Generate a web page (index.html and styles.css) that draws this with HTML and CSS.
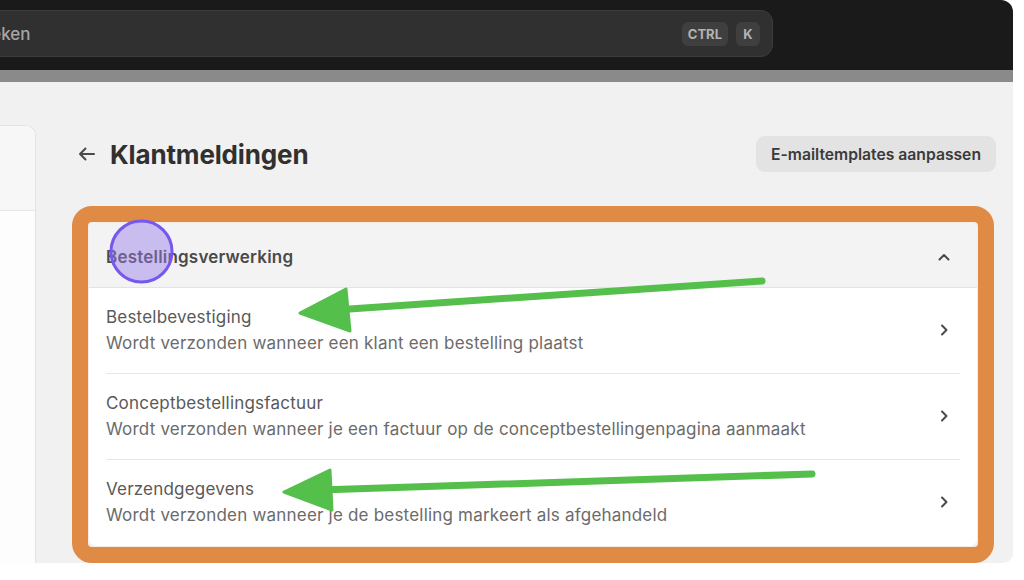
FILE: index.html
```html
<!DOCTYPE html>
<html lang="nl">
<head>
    <meta charset="UTF-8">
    <meta name="viewport" content="width=device-width, initial-scale=1.0">
    <title>Klantmeldingen</title>
    <link rel="stylesheet" href="styles.css">
</head>
<body>
    <div class="screen">
        <header class="topbar">
            <div class="search">
                <span class="search-text">Zoeken</span>
                <span class="keys"><kbd>CTRL</kbd><kbd>K</kbd></span>
            </div>
        </header>
        <div class="strip"></div>
        <main class="main">
            <aside class="side">
                <div class="side-top"></div>
            </aside>
            <section class="content">
                <div class="page-head">
                    <div class="page-title">
                        <svg class="back" width="18" height="14" viewBox="0 0 18 14">
                            <path d="M16 7H2M7.5 1.5L2 7l5.5 5.5" fill="none" stroke="#4a4a4a" stroke-width="2" stroke-linecap="round" stroke-linejoin="round"/>
                        </svg>
                        <h1>Klantmeldingen</h1>
                    </div>
                    <button class="btn" type="button">E-mailtemplates aanpassen</button>
                </div>
                <div class="highlight">
                    <div class="card">
                        <div class="card-head">
                            <span>Bestellingsverwerking</span>
                            <svg class="chev" width="14" height="10" viewBox="0 0 14 10">
                                <path d="M2.5 7.5L7 3l4.5 4.5" fill="none" stroke="#4a4a4a" stroke-width="2" stroke-linecap="round" stroke-linejoin="round"/>
                            </svg>
                        </div>
                        <div class="row">
                            <div class="row-inner">
                                <div>
                                    <div class="row-title">Bestelbevestiging</div>
                                    <div class="row-desc">Wordt verzonden wanneer een klant een bestelling plaatst</div>
                                </div>
                                <svg class="chev" width="10" height="14" viewBox="0 0 10 14">
                                    <path d="M3 2.5L7.5 7 3 11.5" fill="none" stroke="#4a4a4a" stroke-width="2" stroke-linecap="round" stroke-linejoin="round"/>
                                </svg>
                            </div>
                        </div>
                        <div class="row">
                            <div class="row-inner">
                                <div>
                                    <div class="row-title">Conceptbestellingsfactuur</div>
                                    <div class="row-desc">Wordt verzonden wanneer je een factuur op de conceptbestellingenpagina aanmaakt</div>
                                </div>
                                <svg class="chev" width="10" height="14" viewBox="0 0 10 14">
                                    <path d="M3 2.5L7.5 7 3 11.5" fill="none" stroke="#4a4a4a" stroke-width="2" stroke-linecap="round" stroke-linejoin="round"/>
                                </svg>
                            </div>
                        </div>
                        <div class="row">
                            <div class="row-inner">
                                <div>
                                    <div class="row-title">Verzendgegevens</div>
                                    <div class="row-desc">Wordt verzonden wanneer je de bestelling markeert als afgehandeld</div>
                                </div>
                                <svg class="chev" width="10" height="14" viewBox="0 0 10 14">
                                    <path d="M3 2.5L7.5 7 3 11.5" fill="none" stroke="#4a4a4a" stroke-width="2" stroke-linecap="round" stroke-linejoin="round"/>
                                </svg>
                            </div>
                        </div>
                    </div>
                </div>
            </section>
        </main>
        <!-- annotation layer -->
        <svg class="annotations" width="1013" height="563" viewBox="0 0 1013 563">
            <line x1="762" y1="281" x2="335" y2="310" stroke="#55bf4b" stroke-width="7" stroke-linecap="round"/>
            <polygon points="300,313 346,289 350,331" fill="#55bf4b" stroke="#55bf4b" stroke-width="3" stroke-linejoin="round"/>
            <line x1="812" y1="474" x2="320" y2="490" stroke="#55bf4b" stroke-width="7" stroke-linecap="round"/>
            <polygon points="284,492 330,470 332,510" fill="#55bf4b" stroke="#55bf4b" stroke-width="3" stroke-linejoin="round"/>
            <circle cx="141.5" cy="251.5" r="30.5" fill="rgba(150,122,232,0.45)" stroke="#7658ee" stroke-width="3"/>
        </svg>
    </div>
</body>
</html>
```

FILE: styles.css
```css
body {
    margin: 0;
    background-color: #ffffff;
    font-family: Inter, 'Noto Sans', sans-serif;
}
.screen {
    position: relative;
    width: 1013px;
    height: 563px;
    overflow: hidden;
    background-color: #f1f1f1;
    border-radius: 0 12px 10px 0;
}
.topbar {
    height: 70px;
    padding-top: 10px;
    box-sizing: border-box;
    background-color: #1a1a1a;
    display: flex;
    align-items: flex-start;
}
.search {
    margin-left: -40px;
    width: 813px;
    height: 47px;
    box-sizing: border-box;
    padding: 0 12px 0 9px;
    background-color: #303030;
    border: 1px solid #3c3c3c;
    border-radius: 12px;
    display: flex;
    align-items: center;
    justify-content: space-between;
}
.search-text {
    color: #a6a6a6;
    font-size: 17px;
    font-weight: 500;
}
.keys {
    display: flex;
    gap: 8px;
}
kbd {
    font-family: Inter, sans-serif;
    font-size: 13px;
    font-weight: 700;
    color: #b3b3b3;
    background-color: #3f3f3f;
    border-radius: 6px;
    height: 24px;
    min-width: 24px;
    padding: 0 6px;
    box-sizing: border-box;
    display: flex;
    align-items: center;
    justify-content: center;
}
.strip {
    height: 12px;
    background-color: #8a8a8a;
}
.main {
    display: flex;
    gap: 35px;
    padding-top: 43px;
    height: 481px;
    box-sizing: border-box;
}
.side {
    width: 35px;
    flex-shrink: 0;
    background-color: #fdfdfd;
    border: 1px solid #e3e3e3;
    border-left: none;
    border-bottom: none;
    border-radius: 0 10px 0 0;
}
.side-top {
    height: 84px;
    background-color: #f7f7f7;
    border-bottom: 1px solid #e6e6e6;
    border-radius: 0 10px 0 0;
}
.content {
    width: 925px;
    display: flex;
    flex-direction: column;
}
.page-head {
    height: 58px;
    display: flex;
    align-items: center;
    justify-content: space-between;
}
.page-title {
    display: flex;
    align-items: center;
    gap: 14px;
    padding-left: 77px;
    margin-left: -70px;
}
.back {
    display: block;
}
h1 {
    margin: 0;
    font-size: 26px;
    font-weight: 700;
    color: #303030;
    letter-spacing: -0.15px;
}
.btn {
    height: 36px;
    padding: 0 15px;
    border: none;
    border-radius: 9px;
    background-color: #e3e3e3;
    color: #3a3a3a;
    font-family: Inter, sans-serif;
    font-size: 15.7px;
    font-weight: 600;
}
.highlight {
    margin: 23px 2px 0 1px;
    flex: 1;
    border: 16px solid #e08b45;
    border-radius: 20px;
    overflow: hidden;
}
.card {
    height: 100%;
    box-sizing: border-box;
    background-color: #ffffff;
    border: 1px solid #f6ece2;
    border-radius: 8px;
    overflow: hidden;
}
.card-head {
    height: 65px;
    box-sizing: border-box;
    padding: 3px 26px 0 17px;
    background-color: #f3f3f3;
    border-bottom: 1px solid #e3e3e3;
    display: flex;
    align-items: center;
    justify-content: space-between;
    font-size: 17px;
    font-weight: 600;
    letter-spacing: 0.2px;
    color: #4a4a4a;
}
.chev {
    display: block;
}
.row {
    padding: 0 17px;
}
.row-inner {
    padding: 16px 11px 17px 0;
    border-bottom: 1px solid #e6e6e6;
    display: flex;
    align-items: center;
    justify-content: space-between;
}
.row:last-child .row-inner {
    border-bottom: none;
}
.row-title {
    font-size: 17px;
    line-height: 26px;
    letter-spacing: 0.2px;
    color: #595959;
}
.row-desc {
    font-size: 17px;
    line-height: 26px;
    letter-spacing: 0.2px;
    color: #6b6b6b;
}
.annotations {
    position: absolute;
    left: 0;
    top: 0;
    pointer-events: none;
}
```
